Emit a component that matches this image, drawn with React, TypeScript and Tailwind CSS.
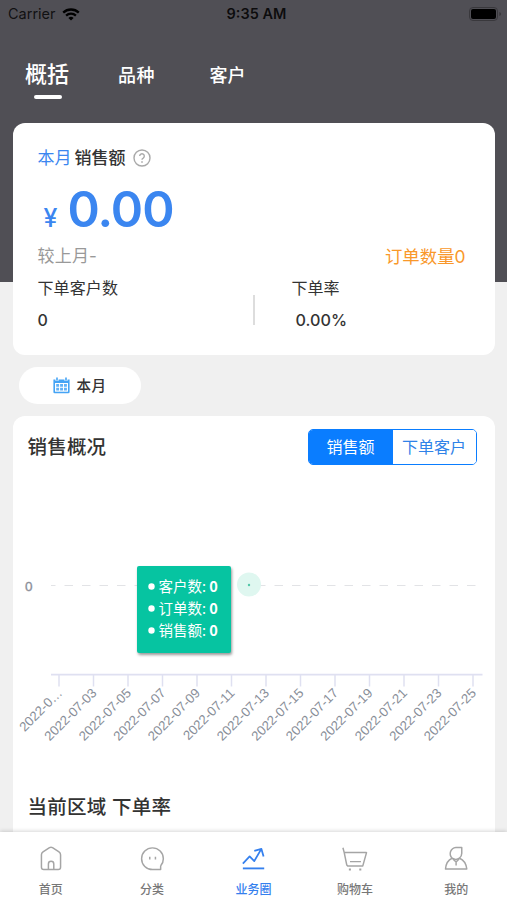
import { ReactNode, useState } from 'react'

const axisDates = [
  '2022-0…',
  '2022-07-03',
  '2022-07-05',
  '2022-07-07',
  '2022-07-09',
  '2022-07-11',
  '2022-07-13',
  '2022-07-15',
  '2022-07-17',
  '2022-07-19',
  '2022-07-21',
  '2022-07-23',
  '2022-07-25',
]

const tooltipRows = [
  { label: '客户数', value: 0 },
  { label: '订单数', value: 0 },
  { label: '销售额', value: 0 },
]

function StatusBar() {
  return (
    <div className="grid h-7 shrink-0 grid-cols-3 items-center pl-2 pr-[5px] text-black">
      <div className="flex items-center gap-[6px]">
        <span className="text-[14.5px] leading-none text-black/80">Carrier</span>
        <svg width="18" height="13" viewBox="0 0 18 13">
          <path d="M9 12.6 6.4 9.9a3.8 3.8 0 0 1 5.2 0z" fill="currentColor" />
          <path
            d="M4.1 7.6a7.2 7.2 0 0 1 9.8 0M1.2 4.6a11.3 11.3 0 0 1 15.6 0"
            fill="none"
            stroke="currentColor"
            strokeWidth="2.3"
          />
        </svg>
      </div>
      <span className="pl-[3px] text-center text-[14.5px] font-semibold leading-none text-black/85">
        9:35 AM
      </span>
      <svg className="justify-self-end" width="33" height="14" viewBox="0 0 33 14">
        <rect x="0.5" y="0.5" width="28" height="13" rx="3.5" fill="none" stroke="#39383c" />
        <rect x="2" y="2" width="25" height="10" rx="2" fill="#000" />
        <path d="M30.3 5v4q1.8-.6 1.8-2t-1.8-2z" fill="#39383c" />
      </svg>
    </div>
  )
}

function HeaderTabs() {
  return (
    <div className="flex h-[95px] shrink-0 items-start pl-[25px] pt-[31px] text-white">
      <div className="flex w-[93px] flex-col items-start">
        <span className="text-[22px] font-medium leading-[31px]">概括</span>
        <span className="ml-[9px] mt-[5px] h-[4px] w-7 rounded-full bg-white" />
      </div>
      <span className="w-[91.5px] text-[18px] font-medium leading-[33px] tracking-[0.4px]">品种</span>
      <span className="text-[18px] font-medium leading-[33px]">客户</span>
    </div>
  )
}

function SummaryCard() {
  return (
    <div className="flex h-[232px] shrink-0 flex-col rounded-xl bg-white pl-[25px] pr-[29px] pt-[24px] text-[#333]">
      <div className="flex h-6 items-center">
        <span className="text-[17px] text-[#3b86f0]">本月</span>
        <span className="ml-[3px] text-[17px] font-medium">销售额</span>
        <svg className="-mt-0.5 ml-[7px]" width="18" height="18" viewBox="0 0 18 18" fill="none" stroke="#a9a9a9">
          <circle cx="9" cy="9" r="8" strokeWidth="1.4" />
          <path d="M6.7 7.1a2.3 2.3 0 1 1 3.5 2c-.9.5-1.2.9-1.2 1.7" strokeWidth="1.4" />
          <circle cx="9" cy="13" r=".5" />
        </svg>
      </div>
      <div className="flex h-[74px] items-baseline pl-[6px] leading-[78px] text-[#3b86f0]">
        <span className="text-[25px] font-medium">¥</span>
        <span className="ml-[10px] text-[49px] font-semibold tracking-[-0.9px]">0.00</span>
      </div>
      <div className="flex h-6 items-center justify-between">
        <span className="text-[17px] tracking-[0.2px] text-[#999]">较上月-</span>
        <span className="text-[17.4px] text-[#f9982a]">订单数量0</span>
      </div>
      <div className="flex">
        <div className="flex w-[215px] flex-col">
          <span className="text-base leading-[38px] tracking-[0.1px]">下单客户数</span>
          <span className="text-base font-medium leading-[27px]">0</span>
        </div>
        <div className="mt-[26px] h-[30px] w-[2px] bg-[#ddd]" />
        <div className="ml-[37px] flex flex-col">
          <span className="text-base leading-[38px]">下单率</span>
          <span className="pl-[4px] text-[16.2px] font-medium leading-[27px]">0.00%</span>
        </div>
      </div>
    </div>
  )
}

function MonthPill() {
  return (
    <button className="ml-[6px] mt-3 flex h-[37px] w-[122px] shrink-0 items-center rounded-full bg-white pl-[34px] text-[#333]">
      <svg width="17" height="17" viewBox="0 0 17 17">
        <path d="M.4 2.5h16.2V15q0 1.3-1.3 1.3H1.7Q.4 16.3.4 15z" fill="#45a4f5" />
        <path d="M4 0v3.8M13 0v3.8" stroke="#fff" strokeWidth="3.2" />
        <path d="M4 .4v3.2M13 .4v3.2" stroke="#45a4f5" strokeWidth="1.6" />
        <path d="M2 6h13v8.7H2z" fill="#fff" />
        <path
          d="M3.2 8.3h2.9m1 0h2.9m1 0h2.9M3.2 12.2h2.9m1 0h2.9m1 0h2.9"
          stroke="#62b2f7"
          strokeWidth="2.7"
        />
      </svg>
      <span className="ml-[7px] mt-px text-[14.5px] font-medium tracking-[0.4px]">本月</span>
    </button>
  )
}

function SalesChart() {
  return (
    <div className="relative h-[280px]">
      <svg
        className="block font-['Liberation_Sans',sans-serif]"
        width="482"
        height="280"
        viewBox="13 480 482 280"
      >
        <text x="25" y="590.5" fontSize="13.5" fill="#8b8e99" stroke="#8b8e99" strokeWidth=".3">
          0
        </text>
        <path d="M51 585.5H482" stroke="#e2e3e6" strokeDasharray="8.5 9" strokeDashoffset="4" />
        <circle cx="249" cy="584.5" r="12" fill="#dff7f0" />
        <circle cx="249" cy="585" r="1.2" fill="#52c7a8" />
        <path d="M51 674.7H482.5" stroke="#dfe0f1" strokeWidth="1.7" />
        {axisDates.map((date, i) => {
          const x = 59 + i * 34.5
          return (
            <g key={date}>
              <path d={`M${x} 675V686.5`} stroke="#dfe0f1" strokeWidth="1.5" />
              <text
                transform={`translate(${x + 4} 693.8) rotate(-45)`}
                textAnchor="end"
                fontSize="13.2"
                fill="#888e98"
              >
                {date}
              </text>
            </g>
          )
        })}
      </svg>
      <div className="absolute left-[124px] top-[86px] flex h-[87px] w-[94px] flex-col rounded-[2px] bg-[#06c4a1] pl-[11px] pt-[9px] text-[14.5px] leading-[22px] text-white shadow-[1px_2px_3px_rgba(0,0,0,0.4)]">
        {tooltipRows.map((row) => (
          <div key={row.label} className="flex items-center">
            <svg className="mr-[4px] mt-px" width="7" height="7" viewBox="0 0 7 7">
              <circle cx="3.5" cy="3.5" r="3.2" fill="#fff" />
            </svg>
            <span className="whitespace-pre font-['Noto_Sans_CJK_SC',sans-serif]">
              {row.label}: <b>{row.value}</b>
            </span>
          </div>
        ))}
      </div>
    </div>
  )
}

function SalesCard() {
  const [mode, setMode] = useState('amount')
  const on = 'bg-[#0a7dff] text-white'
  const off = 'bg-white text-[#2f82e8]'

  return (
    <div className="mt-3 flex min-h-0 flex-1 flex-col overflow-hidden rounded-t-xl bg-white text-[#333]">
      <div className="flex h-16 shrink-0 items-start justify-between pl-[15px] pr-[18px] pt-[13px]">
        <h2 className="text-[19.5px] font-medium leading-[37px] tracking-[0.2px]">销售概况</h2>
        <div className="flex h-9 w-[169px] overflow-hidden rounded-[5px] border border-[#0a7dff] text-base">
          <button
            className={`w-[84px] ${mode === 'amount' ? on : off}`}
            onClick={() => setMode('amount')}
          >
            销售额
          </button>
          <button
            className={`flex-1 ${mode === 'customer' ? on : off}`}
            onClick={() => setMode('customer')}
          >
            下单客户
          </button>
        </div>
      </div>
      <SalesChart />
      <h2 className="pl-[15px] pt-[32px] text-[19.5px] font-medium leading-[30px] tracking-[0.25px]">
        当前区域 下单率
      </h2>
    </div>
  )
}

function TabItem({ label, active, children }: { label: string; active?: boolean; children: ReactNode }) {
  return (
    <div className={`flex flex-1 flex-col items-center pt-[13px] ${active ? 'text-[#3580ee]' : 'text-[#777]'}`}>
      <svg
        className={active ? 'text-[#3580ee]' : 'text-[#a5a5a5]'}
        width="28"
        height="28"
        viewBox="0 0 28 28"
        fill="none"
        stroke="currentColor"
        strokeWidth="1.6"
        strokeLinejoin="round"
      >
        {children}
      </svg>
      <span className="mt-[9px] text-xs font-medium leading-5">{label}</span>
    </div>
  )
}

function BottomBar() {
  return (
    <nav className="z-10 flex h-[68px] shrink-0 bg-white shadow-[0_-1px_4px_rgba(0,0,0,0.16)]">
      <TabItem label="首页">
        <path d="M12.4 2.9q1.6-1 3.2 0l7 4.6q1.7 1.1 1.7 3V24q0 2.5-2.5 2.5H6.2Q3.7 26.5 3.7 24V10.5q0-1.9 1.7-3z" />
        <path d="M11.2 26.5v-6a2.9 2.9 0 0 1 5.8 0v6" />
      </TabItem>
      <TabItem label="分类">
        <path d="M14.5 26.5A11.7 11.7 0 1 1 26.2 14.8q0 4-2.5 7.1-.5.7-.4 1.4v3.2z" />
        <path d="M11.6 12.6v3M17.7 12.6v3" />
      </TabItem>
      <TabItem label="业务圈" active>
        <path d="M2 20 9.3 12.3 14.3 17.3 21.8 4.5M14.3 6.3 22 4.2 24.3 12.4" strokeWidth="1.9" />
        <path d="M2 25.2H25" strokeWidth="2" />
      </TabItem>
      <TabItem label="购物车">
        <path d="M1 3 2.4 8.2 5.1 21.5 6.1 22.5H22.4L26.4 8.2H2.4M8.6 17.9H20.4" />
        <path d="M7.4 26.4H9.6M18.6 26.4H20.8" strokeWidth="2" />
      </TabItem>
      <TabItem label="我的">
        <path d="M9.8 14.2A6.8 6.8 0 0 1 13.9 2.6H20.2V9q0 3.3-2.5 5.2-3.7 2.7-7.9 0Z" />
        <path d="M9.8 14.3Q3.5 17 2.7 25.8H25.6Q24.5 17 17.8 14.3M10.6 15 14.1 18.3 17.3 15M14.1 18.3V22.2" />
      </TabItem>
    </nav>
  )
}

export default function App() {
  return (
    <div className="flex h-[900px] w-[507px] flex-col overflow-hidden bg-[linear-gradient(#504f55_282px,#f0f0f0_282px)] font-['Inter','Noto_Sans_CJK_SC',sans-serif]">
      <StatusBar />
      <HeaderTabs />
      <main className="flex min-h-0 flex-1 flex-col px-[12.5px]">
        <SummaryCard />
        <MonthPill />
        <SalesCard />
      </main>
      <BottomBar />
    </div>
  )
}
